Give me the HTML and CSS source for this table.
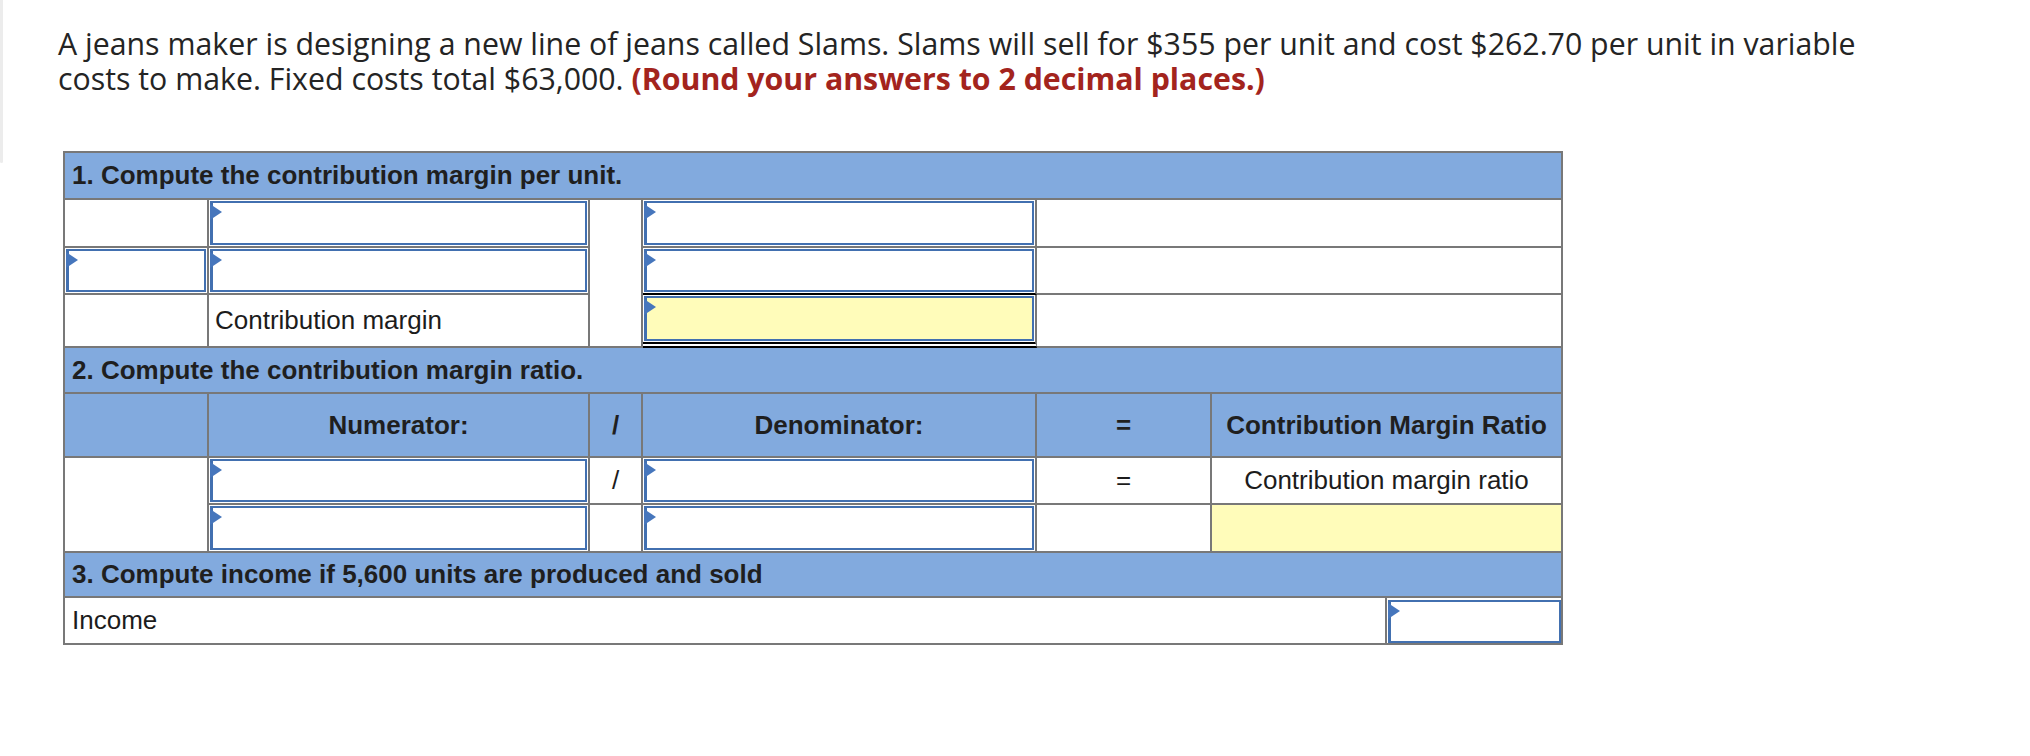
FILE: index.html
```html
<!DOCTYPE html>
<html lang="en">
<head>
<meta charset="utf-8">
<title>Contribution margin</title>
<link rel="stylesheet" href="styles.css">
</head>
<body>
<div class="page">
  <div class="edge"></div>
  <div class="main">
    <p class="intro">A jeans maker is designing a new line of jeans called Slams. Slams will sell for $355 per unit and cost $262.70 per unit in variable costs to make. Fixed costs total $63,000. <strong class="note">(Round your answers to 2 decimal places.)</strong></p>

    <div class="sheet">
      <div class="cell head span-all">1. Compute the contribution margin per unit.</div>

      <div class="cell"></div>
      <div class="cell"><div class="inp"></div></div>
      <div class="cell c3-tall"></div>
      <div class="cell"><div class="inp"></div></div>
      <div class="cell span-2"></div>

      <div class="cell"><div class="inp"></div></div>
      <div class="cell"><div class="inp"></div></div>
      <div class="cell sum-top"><div class="inp"></div></div>
      <div class="cell span-2"></div>

      <div class="cell"></div>
      <div class="cell label">Contribution margin</div>
      <div class="cell total"><div class="inp yellow"></div></div>
      <div class="cell span-2"></div>

      <div class="cell head span-all">2. Compute the contribution margin ratio.</div>

      <div class="cell sub"></div>
      <div class="cell sub center">Numerator:</div>
      <div class="cell sub center">/</div>
      <div class="cell sub center">Denominator:</div>
      <div class="cell sub center">=</div>
      <div class="cell sub center">Contribution Margin Ratio</div>

      <div class="cell c1-tall"></div>
      <div class="cell"><div class="inp"></div></div>
      <div class="cell center">/</div>
      <div class="cell"><div class="inp"></div></div>
      <div class="cell center">=</div>
      <div class="cell center">Contribution margin ratio</div>

      <div class="cell"><div class="inp"></div></div>
      <div class="cell"></div>
      <div class="cell"><div class="inp"></div></div>
      <div class="cell"></div>
      <div class="cell fill-yellow"></div>

      <div class="cell head span-all">3. Compute income if 5,600 units are produced and sold</div>

      <div class="cell span-all income">
        <div class="income-label">Income</div>
        <div class="income-entry"><div class="inp"></div></div>
      </div>
    </div>
  </div>
</div>
</body>
</html>
```

FILE: styles.css
```css
html, body {
  margin: 0;
  padding: 0;
  background: #ffffff;
}

body {
  font-family: "Liberation Sans", Arial, sans-serif;
  color: #1c1c1c;
}

.page {
  display: flex;
  align-items: flex-start;
}

.edge {
  flex: none;
  width: 3px;
  height: 163px;
  background: #ececec;
  border-radius: 0 0 2px 2px;
}

.main {
  padding: 26px 0 0 55px;
}

.intro {
  margin: 0;
  width: 1815px;
  font-family: "Open Sans", Lato, sans-serif;
  font-size: 30.3px;
  line-height: 35px;
  color: #242424;
}

.note {
  color: #a3241d;
  font-weight: 700;
}

.sheet {
  box-sizing: border-box;
  width: 1500px;
  margin: 55px 0 0 5px;
  display: grid;
  grid-template-columns: 144px 381px 53px 394px 175px 351px;
  grid-template-rows: 47px 48px 47px 53px 46px 64px 47px 48px 45px 47px;
  border-top: 2px solid #787878;
  border-left: 2px solid #787878;
}

.cell {
  box-sizing: border-box;
  border-right: 2px solid #787878;
  border-bottom: 2px solid #787878;
  background: #ffffff;
  font-size: 26px;
  display: flex;
  align-items: center;
  min-width: 0;
}

.span-all {
  grid-column: 1 / -1;
}

.span-2 {
  grid-column: span 2;
}

.c3-tall {
  grid-column: 3;
  grid-row: 2 / span 3;
}

.c1-tall {
  grid-column: 1;
  grid-row: 7 / span 2;
}

.head {
  background: #82aade;
  font-weight: 700;
  padding-left: 7px;
  color: #1f1f1f;
}

.sub {
  background: #82aade;
  font-weight: 700;
  color: #1f1f1f;
}

.center {
  justify-content: center;
  text-align: center;
}

.label {
  padding-left: 6px;
}

.sum-top {
  border-bottom-color: #000000;
}

.total {
  border-bottom: 6px double #000000;
}

.fill-yellow {
  background: #fffcba;
}

.inp {
  position: relative;
  box-sizing: border-box;
  align-self: stretch;
  flex: 1;
  margin: 1px;
  border: 2px solid #4270b0;
  border-left-width: 3px;
  background: #ffffff;
}

.inp::before {
  content: "";
  position: absolute;
  left: -3px;
  top: 1px;
  width: 0;
  height: 0;
  border-left: 12px solid #4676bc;
  border-top: 8px solid transparent;
  border-bottom: 8px solid transparent;
}

.inp.yellow {
  background: #fffcba;
}

.income {
  padding: 0;
  align-items: stretch;
}

.income-label {
  flex: 1;
  display: flex;
  align-items: center;
  padding-left: 7px;
}

.income-entry {
  flex: none;
  box-sizing: border-box;
  width: 176px;
  border-left: 2px solid #787878;
  display: flex;
}

.income-entry .inp {
  margin: 2px 0 0 1px;
}
```
